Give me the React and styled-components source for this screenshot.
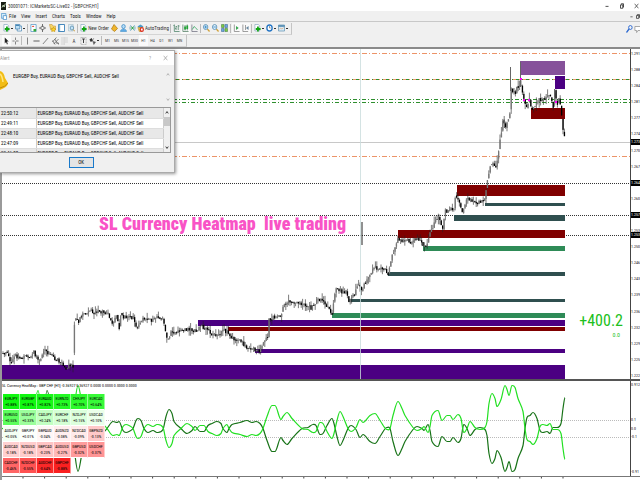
import React from "react";
import styled, { createGlobalStyle } from "styled-components";

const narrow = `"Liberation Sans Narrow", "Roboto Condensed", "Liberation Sans", sans-serif`;

const GlobalStyle = createGlobalStyle`
  * {
    box-sizing: border-box;
  }

  body {
    background: #fff;
    font-family: ${narrow};
    margin: 0;
    overflow: hidden;
  }

  button {
    background: none;
    border: 0;
    color: inherit;
    font: inherit;
    padding: 0;
  }
`;

const Terminal = styled.div`
  display: flex;
  flex-direction: column;
  min-height: 100vh;
`;

const TitleBar = styled.header`
  align-items: center;
  background: #fff;
  display: flex;
  gap: 2px;
  height: 11px;
  padding-left: 1px;
`;

const Title = styled.h1`
  color: #333;
  flex: 1;
  font-size: 5px;
  font-weight: normal;
  line-height: 10px;
  margin: 0;
`;

const WindowControls = styled.div`
  display: flex;
  gap: ${props => props.$gap || 0}px;
  margin-right: -1px;
`;

const IconButton = styled.button`
  align-items: center;
  background: ${props => (props.$pressed ? "#fafafa" : "transparent")};
  color: ${props => props.$color || "#333"};
  display: flex;
  flex: none;
  gap: 1px;
  height: 11px;
  justify-content: center;
  min-width: ${props => props.$width || 9}px;
`;

const Timeframe = styled(IconButton)`
  color: #444;
  font-size: 4px;
`;

const MenuBar = styled.nav`
  align-items: center;
  background: #f0f0f0;
  border-bottom: 1px solid #c8c8c8;
  color: #222;
  display: flex;
  font-size: 5px;
  height: 11px;
  line-height: 10px;
  padding-left: 1px;
`;

const MenuItem = styled.button`
  margin-right: ${props => (props.$last ? "auto" : "5px")};
`;

const AppIcon = styled.span`
  display: flex;
  margin-right: 2px;
`;

const Toolbar = styled.div`
  align-items: center;
  background: #f0f0f0;
  display: flex;
  font-size: 5px;
  height: ${props => props.$height}px;
  justify-content: space-between;
`;

const ToolGroup = styled.div`
  align-items: center;
  border-bottom: 1px solid #d4d4d4;
  border-right: 1px solid #c4c4c4;
  display: flex;
  height: 12px;
  padding: 0 2px;
`;

const Divider = styled.i`
  border-left: 1px solid #bbb;
  height: 9px;
  margin: 0 1px;
`;

const Caret = styled.i`
  background: #333;
  height: 1px;
  margin-right: 1px;
  width: 2px;
`;

const Workspace = styled.main`
  border-left: 2px solid #9a9a9a;
  border-top: 2px solid #8a8a8a;
  display: flex;
  flex: 1;
  flex-direction: column;
  position: relative;
`;

const Pane = styled.section`
  border-bottom: ${props => props.$border};
  display: flex;
  flex: ${props => props.$grow} 1 0;
  min-height: 0;
`;

const Plot = styled.div`
  flex: 1;
  min-width: 0;
  position: relative;

  > svg {
    display: block;
    height: 100%;
    left: 0;
    position: absolute;
    width: 100%;
  }
`;

const Axis = styled.div`
  border-left: 1px solid #444;
  color: #111;
  display: flex;
  flex: none;
  flex-direction: column;
  font-size: 4px;
  justify-content: space-between;
  line-height: 6px;
  padding-top: 2px;
  position: relative;
  width: 10px;
`;

const Tick = styled.span`
  white-space: nowrap;
`;

const PriceTag = styled.span`
  background: #000;
  color: #fff;
  left: 0;
  position: absolute;
  top: ${props => props.$top}%;
  width: 100%;
`;

const SubTick = styled.span`
  left: 0;
  position: absolute;
  top: ${props => props.$top}%;
`;

const Caption = styled.p`
  color: #f953c6;
  font-size: 18px;
  font-weight: 900;
  left: 97px;
  line-height: 20px;
  margin: 0;
  position: absolute;
  top: 50%;
  white-space: pre;
`;

const Profit = styled.div`
  bottom: 40px;
  color: #20bf20;
  font-size: 16px;
  line-height: 20px;
  position: absolute;
  right: 7px;
  text-align: right;
`;

const Pips = styled.div`
  font-size: 6px;
  line-height: 8px;
  padding-right: 3px;
`;

const Dialog = styled.section`
  background: #f0f0f0;
  border: 1px solid #aaa;
  border-left: 0;
  box-shadow: 1px 1px 3px rgba(0, 0, 0, 0.4);
  font-size: 5px;
  left: -2px;
  position: absolute;
  top: 1px;
  width: 175px;
`;

const DialogTitle = styled.div`
  align-items: center;
  background: #fff;
  color: #999;
  display: flex;
  height: 14px;
  padding-right: 1px;
`;

const DialogName = styled.span`
  flex: 1;
`;

const Message = styled.div`
  display: flex;
  height: 42px;
  justify-content: space-between;
  padding: 5px 3px 3px 0;
`;

const MessageText = styled.p`
  flex: 1;
  line-height: 8px;
  margin: 2px 0 0 4px;
`;

const ScrollArrows = styled.div`
  align-items: center;
  background: ${props => (props.$filled ? "#f0f0f0" : "transparent")};
  color: ${props => (props.$filled ? "#222" : "#aaa")};
  display: flex;
  flex-direction: column;
  justify-content: space-between;
  padding: 2px 0;
  width: 6px;
`;

const Thumb = styled.i`
  background: #c8c8c8;
  height: 9px;
  margin: 2px 0 auto;
  width: 6px;
`;

const LogBox = styled.div`
  background: #fff;
  border: 1px solid #999;
  border-left: 0;
  display: flex;
  height: 46px;
  margin-right: 3px;
  overflow: hidden;
`;

const Log = styled.table`
  border-collapse: collapse;
  flex: 1;
  height: 50px;
`;

const LogRow = styled.tr`
  background: ${props => (props.$shaded ? "#e8e8e8" : "#fff")};
`;

const LogCell = styled.td`
  border-bottom: 1px solid #ddd;
  border-right: 1px solid #ccc;
  height: 10px;
  line-height: 8px;
  padding: 0 1px;
  width: ${props => props.$width || "auto"};
`;

const DialogFooter = styled.div`
  display: flex;
  justify-content: center;
  padding: 4px 12px 4px 0;
`;

const OkButton = styled.button`
  background: #e4e4e4;
  border: 1px solid #1979ca;
  height: 11px;
  line-height: 9px;
  width: 25px;
`;

const PaneLabel = styled.div`
  font-size: 4px;
  left: 0;
  line-height: 5px;
  position: absolute;
  top: 2px;
  white-space: nowrap;
`;

const Heatmap = styled.table`
  border-collapse: separate;
  border-spacing: 0;
  font-size: 4px;
  left: 1px;
  line-height: 6px;
  position: absolute;
  text-align: center;
  top: 13px;
`;

const HeatCell = styled.td`
  background: ${props => props.$color};
  border-bottom: 1px solid #fff;
  border-right: 1px solid rgba(255, 255, 255, 0.5);
  height: 16px;
  min-width: 17px;
  padding: 0;
  width: 17px;
`;

const TimeScale = styled.footer`
  height: 3px;

  svg {
    display: block;
    height: 100%;
    width: 100%;
  }
`;

const glyphs = {
  newChart: (
    <>
      <path d="M2 1h8l3 3v10H2z" fill="#fff" stroke="#5582a8" />
      <path d="M9 5v10M4 10h11" stroke="#12a512" strokeWidth="4" />
    </>
  ),
  windows: (
    <>
      <path d="M5 4h10v10H5z" fill="#fff" stroke="#3e80b0" strokeWidth="1.5" />
      <path d="M1 1h10v9H1z" fill="#bfe0f4" stroke="#3e80b0" strokeWidth="1.5" />
      <path d="M2 3h8" stroke="#3e80b0" strokeWidth="2" />
    </>
  ),
  market: (
    <>
      <path d="M2 1h12v14H2z" fill="#fff" stroke="#4c93c4" strokeWidth="1.5" />
      <path d="M4 6l3-3 3 3z" fill="#e13c2c" />
      <path d="M8 10h6v5H8z" fill="#35a835" />
    </>
  ),
  move: (
    <>
      <circle cx="8" cy="8" r="4" fill="none" stroke="#666" strokeWidth="1.5" />
      <path d="M8 0v6M8 10v6M0 8h6M10 8h6" stroke="#666" strokeWidth="2" />
    </>
  ),
  star: (
    <>
      <path d="M1 1h6l2 3h6v8H4z" fill="#f5d567" stroke="#ba8820" />
      <path d="M10 6l2 3 4 1-3 2v4l-3-2-4 1 1-3-2-3h4z" fill="#ffd22d" stroke="#b98600" />
    </>
  ),
  panel: (
    <>
      <path d="M1 1h14v14H1z" fill="#fff" stroke="#397fb8" strokeWidth="2" />
      <path d="M2 2h3v12H2z" fill="#7db6dd" />
    </>
  ),
  tester: (
    <>
      <path d="M1 1h11v13H1z" fill="#d9e9f3" stroke="#92aebd" />
      <circle cx="9" cy="8" r="4" fill="#c4e3f7" stroke="#5084a7" strokeWidth="1.5" />
      <path d="M12 11l4 4" stroke="#c9952b" strokeWidth="2" />
    </>
  ),
  gold: <path d="M7 1l8 8-7 6-7-5z" fill="#f0b52c" stroke="#ad7911" strokeWidth="1.5" />,
  person: (
    <>
      <circle cx="8" cy="5" r="4" fill="#b5dcf7" stroke="#3083c0" strokeWidth="1.5" />
      <path d="M1 15c0-7 14-7 14 0z" fill="#5daae4" stroke="#3083c0" />
    </>
  ),
  signal: (
    <>
      <path d="M4 2q-5 6 0 12M12 2q5 6 0 12" fill="none" stroke="#75acca" strokeWidth="1.5" />
      <path d="M6 4q-3 4 0 8M10 4q3 4 0 8" fill="none" stroke="#4ba27b" strokeWidth="1.5" />
      <circle cx="8" cy="8" r="2" fill="#28a640" />
    </>
  ),
  auto: (
    <>
      <path d="M1 5l7-4 7 4-7 4z" fill="#4d9ac9" />
      <path d="M2 7h12l-3 8H5z" fill="#eac64b" stroke="#a98325" />
      <circle cx="11" cy="11" r="5" fill="#de2d1f" />
      <path d="M9 9h4v4H9z" fill="#fff" />
    </>
  ),
  bars: <path d="M3 1v14H15M1 3h2M7 4v8M5 9h2M7 5h2M12 2v10M12 4h3" fill="none" stroke="#3d795b" strokeWidth="1.5" />,
  candles: (
    <>
      <path d="M2 1v14h13M7 2v11M12 1v12" fill="none" stroke="#467359" strokeWidth="1.5" />
      <path d="M5 5h4v6H5zM10 3h4v7h-4z" fill="#21a435" />
    </>
  ),
  line: (
    <>
      <path d="M2 1v14h13" fill="none" stroke="#667" strokeWidth="1.5" />
      <path d="M3 11l4-6 3 2 5 5" fill="none" stroke="#22a052" strokeWidth="1.5" />
    </>
  ),
  zoomIn: (
    <>
      <path d="M10 10l5 5" stroke="#d0a13a" strokeWidth="3" />
      <circle cx="6" cy="6" r="5" fill="#e1f1fc" stroke="#3c7ca8" strokeWidth="1.5" />
      <path d="M6 3v6M3 6h6" stroke="#167ac0" strokeWidth="1.5" />
    </>
  ),
  zoomOut: (
    <>
      <path d="M10 10l5 5" stroke="#d0a13a" strokeWidth="3" />
      <circle cx="6" cy="6" r="5" fill="#e1f1fc" stroke="#3c7ca8" strokeWidth="1.5" />
      <path d="M3 6h6" stroke="#167ac0" strokeWidth="1.5" />
    </>
  ),
  tile: (
    <>
      <path d="M1 1h6v6H1zM9 9h6v6H9z" fill="#7fcb42" stroke="#306e37" />
      <path d="M9 1h6v6H9zM1 9h6v6H1z" fill="#6ba9de" stroke="#2b5282" />
    </>
  ),
  scroll: (
    <>
      <path d="M3 1v14h12" fill="none" stroke="#777" strokeWidth="1.5" />
      <path d="M7 4l6 4-6 4z" fill="#31a44a" />
    </>
  ),
  shift: (
    <>
      <path d="M2 1v14h12M8 2v10" fill="none" stroke="#777" strokeWidth="1.5" />
      <path d="M15 4l-6 4 6 4z" fill="#68879f" />
    </>
  ),
  clock: (
    <>
      <circle cx="8" cy="8" r="6" fill="#fff" stroke="#2676c4" strokeWidth="3" />
      <path d="M8 4v4h3" fill="none" stroke="#333" />
    </>
  ),
  template: (
    <>
      <path d="M1 2h14v12H1z" fill="#d9ebf6" stroke="#5c90b0" strokeWidth="1.5" />
      <path d="M1 4h14" stroke="#4380aa" strokeWidth="3" />
      <path d="M3 11l3-3 3 2 4-3" fill="none" stroke="#e48f48" />
    </>
  ),
  cursor: <path d="M4 1v12l3-3 2 5 2-1-2-5h4z" fill="#222" />,
  cross: <path d="M8 1v5M8 9v6M1 8h5M9 8h6" stroke="#555" strokeWidth="1.5" />,
  vertical: <path d="M8 1v14" stroke="#555" strokeWidth="1.5" />,
  horizontal: <path d="M1 8h14" stroke="#555" strokeWidth="2" />,
  trend: <path d="M2 14L14 2" stroke="#555" strokeWidth="1.5" />,
  channel: <path d="M1 10L10 1M4 14L15 4M1 7l6 8M6 4l7 9M9 12h6v3" fill="none" stroke="#555" strokeWidth="1.5" />,
  fibo: <path d="M1 2h14M1 6h14M1 10h14M1 14h9" stroke="#888" strokeDasharray="2 1" />,
  label: (
    <>
      <path d="M2 1h12v14H2z" fill="none" stroke="#777" strokeDasharray="2 1" />
      <path d="M5 4h6M8 4v8" stroke="#333" strokeWidth="2" />
    </>
  ),
  arrows: (
    <>
      <path d="M1 5l5-3 3 5-5 3z" fill="#333" />
      <path d="M9 9l6 1-4 5zM11 2l-4 8" fill="#555" stroke="#555" />
    </>
  ),
  search: (
    <>
      <circle cx="10" cy="5" r="4" fill="none" stroke="#2c69d1" strokeWidth="2" />
      <path d="M7 8l-6 7" stroke="#2c69d1" strokeWidth="3" />
    </>
  ),
  chat: <path d="M2 3h13v8H9l-3 4v-4H2z" fill="#fff" stroke="#888" strokeWidth="1.5" />,
  minimize: <path d="M2 9h12" stroke="#222" strokeWidth="2.5" />,
  restore: <path d="M2 5h9v9H2zM5 4V2h9v9h-2" fill="none" stroke="#222" strokeWidth="2.5" />,
  close: <path d="M2 2l12 12M14 2L2 14" stroke="currentColor" strokeWidth="2" />,
  app: (
    <>
      <path d="M0 0h16v16H0z" fill="#171d14" />
      <path d="M3 11l4-5 3 4 4-7" fill="none" stroke="#d9eccb" strokeWidth="2" />
    </>
  ),
  chartWindow: (
    <>
      <path d="M1 1h12v11H1z" fill="#d6edfa" stroke="#5a9dcf" strokeWidth="2" />
      <path d="M6 6h9v9H6z" fill="#fff" stroke="#4e93ca" strokeWidth="2" />
    </>
  ),
  up: <path d="M3 11l5-6 5 6" fill="none" stroke="currentColor" strokeWidth="3" />,
  down: <path d="M3 5l5 6 5-6" fill="none" stroke="currentColor" strokeWidth="3" />,
};

const Glyph = ({ name, width = 7, height = 8 }) => (
  <svg
    width={width}
    height={height}
    viewBox="0 0 16 16"
    preserveAspectRatio="none"
    aria-hidden="true">
    {glyphs[name]}
  </svg>
);

const Tool = ({ name, label, children, ...rest }) => (
  <IconButton aria-label={label || name} {...rest}>
    <Glyph name={name} />
    {children}
  </IconButton>
);

const menus = ["File", "View", "Insert", "Charts", "Tools", "Window", "Help"];
const timeframes = ["M1", "M5", "M15", "M30", "H1", "H4", "D1", "W1", "MN"];

const prices = [
  "1.291", "1.288", "1.284", "1.281", "1.277", "1.274", "1.270",
  "1.267", "1.264", "1.260", "1.257", "1.253", "1.250", "1.246",
  "1.243", "1.239", "1.236", "1.232", "1.229", "1.225", "1.222",
];

const alert = "EURGBP Buy, EURAUD Buy, GBPCHF Sell, AUDCHF Sell";
const alertTimes = ["22:50:12", "22:49:11", "22:48:10", "22:47:09", "22:46:08"];

const heat = [
  [
    ["EURJPY", "+0.88%", "#10f810"],
    ["EURGBP", "+0.87%", "#10f810"],
    ["EURAUD", "+0.82%", "#18f818"],
    ["EURNZD", "+0.73%", "#24fa24"],
    ["CHFJPY", "+0.70%", "#2cfa2c"],
    ["EURCAD", "+0.64%", "#38fa38"],
  ],
  [
    ["EURUSD", "+0.55%", "#5cff5c"],
    ["USDJPY", "+0.33%", "#9cff9c"],
    ["CADJPY", "+0.24%", "#c2ffc2"],
    ["EURCHF", "+0.18%", "#d4ffd4"],
    ["NZDJPY", "+0.15%", "#dcffdc"],
    ["USDCAD", "+0.10%", "#eaffea"],
  ],
  [
    ["AUDJPY", "+0.05%", "#f4fff4"],
    ["GBPJPY", "+0.01%", "#fcfffc"],
    ["GBPAUD", "-0.04%", "#fff6f6"],
    ["AUDNZD", "-0.08%", "#ffeeee"],
    ["NZDCAD", "-0.09%", "#ffeaea"],
    ["GBPNZD", "-0.13%", "#ffc8c8"],
  ],
  [
    ["AUDCAD", "-0.18%", "#ffd0d0"],
    ["NZDUSD", "-0.18%", "#ffcccc"],
    ["GBPCAD", "-0.23%", "#ffc4c4"],
    ["AUDUSD", "-0.27%", "#ffb8b8"],
    ["GBPUSD", "-0.32%", "#ff9c9c"],
    ["USDCHF", "-0.37%", "#ff9494"],
  ],
  [
    ["CADCHF", "-0.46%", "#ff6666"],
    ["NZDCHF", "-0.55%", "#ff5252"],
    ["AUDCHF", "-0.64%", "#fa2828"],
    ["GBPCHF", "-0.88%", "#fa2020"],
  ],
];

// x, y, height, fill; every zone runs up to the last bar
const zones = [
  [520, 61, 14, "#86519a"],
  [555, 76, 13, "#4b0082"],
  [531, 108, 11, "#800000"],
  [457, 185, 11, "#800000"],
  [485, 203, 3, "#2f4f4f"],
  [454, 215, 6, "#2f4f4f"],
  [398, 230, 8, "#800000"],
  [423, 246, 5, "#2e8b57"],
  [388, 272, 4, "#2f4f4f"],
  [349, 299, 3, "#2f4f4f"],
  [332, 313, 5, "#2e8b57"],
  [198, 320, 6, "#4b0082"],
  [228, 327, 4, "#800000"],
  [255, 349, 4, "#4b0082"],
  [2, 365, 14, "#4b0082"],
];
const lastBar = 565;

const levels = [
  [53, "#ec9468", "5 2 1 2"],
  [79, "#ec9468", "5 2 1 2"],
  [79, "#2f8f2f", "1 3 3 3"],
  [99, "#2f8f2f", "4 2 1 2"],
  [102, "#2f8f2f", "4 2 1 2"],
  [156, "#ec9468", "5 2 1 2"],
  [142, "#c8c8c8", "none"],
  [183, "#333", "1 1"],
  [215, "#333", "1 1"],
  [235, "#333", "1 1"],
];

const trend = [
  [2, 355], [7, 350], [11, 364], [15, 356], [20, 358], [26, 355], [31, 357],
  [34, 352], [40, 362], [44, 349], [50, 355], [56, 360], [61, 361], [66, 369],
  [70, 364], [73, 367], [74, 330], [75, 318], [78, 322], [82, 314], [87, 312],
  [90, 310], [95, 312], [104, 312], [108, 313], [112, 322], [117, 316],
  [119, 328], [121, 315], [126, 317], [133, 317], [137, 330], [141, 320],
  [146, 318], [152, 320], [156, 317], [163, 319], [166, 333], [168, 341],
  [171, 333], [176, 333], [180, 331], [190, 328], [196, 332], [201, 326],
  [208, 329], [216, 337], [225, 330], [230, 335], [234, 340], [240, 338],
  [245, 347], [252, 348], [258, 351], [261, 348], [264, 341], [268, 335],
  [269, 320], [275, 316], [281, 318], [283, 305], [288, 302], [296, 302],
  [305, 304], [312, 308], [318, 299], [323, 301], [328, 307], [332, 313],
  [334, 300], [336, 290], [340, 291], [346, 292], [349, 300], [355, 293],
  [358, 282], [362, 291], [366, 281], [370, 274], [375, 267], [380, 270],
  [384, 268], [388, 273], [392, 257], [396, 243], [398, 238], [402, 241],
  [407, 239], [412, 242], [416, 239], [422, 242], [426, 248], [430, 232],
  [433, 226], [438, 216], [443, 228], [445, 211], [450, 210], [454, 207],
  [456, 194], [459, 201], [463, 213], [465, 205], [468, 197], [473, 202],
  [478, 202], [485, 198], [488, 178], [491, 163], [496, 168], [500, 141],
  [503, 121], [506, 127], [510, 111], [511, 90], [515, 93], [519, 84],
  [522, 88], [524, 98], [527, 109], [529, 98], [532, 110], [537, 100],
  [543, 100], [550, 95], [553, 107], [555, 91], [557, 106], [559, 98],
  [561, 108], [563, 128], [565, 141],
];

const noise = n => {
  const s = Math.sin(n * 127.1) * 43758.5453;
  return s - Math.floor(s);
};

const priceAt = x => {
  const i = Math.max(1, trend.findIndex(p => p[0] >= x));
  const [x0, y0] = trend[i - 1];
  const [x1, y1] = trend[i];
  return y0 + ((y1 - y0) * (x - x0)) / (x1 - x0);
};

const bars = [];
for (let x = 3, n = 0; x < 565; x += 1.4, n++) {
  const open = priceAt(x - 1) + (noise(n) - 0.5) * 4;
  const close = priceAt(x) + (noise(n + 1) - 0.5) * 4;
  bars.push({
    x,
    down: close > open,
    top: Math.min(open, close),
    bottom: Math.max(open, close) + 0.6,
    high: Math.min(open, close) - noise(n + 500) ** 2 * 6,
    low: Math.max(open, close) + noise(n + 900) ** 2 * 6,
  });
}

const PriceChart = () => (
  <svg viewBox="2 49 628 330" preserveAspectRatio="none">
    {levels.map(([y, color, dash], i) => (
      <line
        key={i}
        x1="2"
        x2="630"
        y1={y + 0.5}
        y2={y + 0.5}
        stroke={color}
        strokeDasharray={dash}
        shapeRendering="crispEdges"
      />
    ))}
    {zones.map(([x, y, height, fill]) => (
      <rect key={y} x={x} y={y} width={lastBar - x} height={height} fill={fill} />
    ))}
    {bars.map(bar => (
      <g key={bar.x}>
        <line
          x1={bar.x}
          x2={bar.x}
          y1={bar.high}
          y2={bar.low}
          stroke="#222"
          strokeWidth="0.6"
        />
        <rect
          x={bar.x - 0.6}
          y={bar.top}
          width="1.3"
          height={bar.bottom - bar.top}
          fill={bar.down ? "#000" : "#777"}
        />
      </g>
    ))}
    <path d="M510.500 67v24M504.500 120v8M520.500 62v25M554.500 89v8" stroke="#666" fill="none" />
    <path d="M362 222v23" stroke="#222" />
    <path d="M520 78h2v2h-2zM523 99h2v2h-2zM528 99h2v2h-2zM555 101h2v2h-2z" fill="#f0f" />
    <path d="M360.500 49v330" stroke="#c9dcdc" strokeOpacity="0.8" />
  </svg>
);

// strength of the first currency, x against height over the zero line
const strength = [
  [2, 0], [12, 4], [22, -3], [32, 8], [38, 38], [42, 10], [47, -38], [54, -4],
  [62, 6], [70, -4], [74, 20], [78, 43], [82, 25], [88, 2], [95, -6],
  [103, 4], [107, 0], [113, -7], [117, -6], [119, -7], [123, 2], [126, 4],
  [129, 3], [133, 0], [136, -8], [138, -10], [141, -8], [144, 0], [148, 4],
  [153, 2], [157, 4], [163, 1], [166, -12], [169, -19], [172, -15],
  [174, -7], [181, 0], [187, 5], [192, 2], [195, -2], [200, 3], [204, 3],
  [208, -3], [212, -5], [217, -7], [221, -5], [223, 0], [227, 4], [229, 0],
  [232, -4], [240, -6], [247, -8], [252, -6], [256, -7], [260, -5], [263, 0],
  [267, 12], [272, 23], [275, 23], [281, 9], [283, 12], [287, 16], [292, 10],
  [302, 0], [308, -1], [313, -4], [316, -3], [320, 6], [323, 5], [327, -3],
  [332, -10], [334, -5], [337, 8], [340, 17], [343, 12], [348, 0], [351, -3],
  [356, 1], [360, 9], [363, 6], [370, 13], [375, 15], [380, 8], [387, -1],
  [390, 0], [393, 13], [398, 27], [402, 20], [405, 13], [413, 1], [417, -2],
  [422, 0], [424, 2], [428, -4], [430, 2], [432, 13], [438, 18], [442, 8],
  [447, 13], [450, 13], [453, 9], [458, 14], [461, 10], [463, -2], [464, -4],
  [467, 0], [470, 7], [475, 1], [480, -1], [485, 1], [487, 7], [489, 25],
  [492, 35], [495, 30], [497, 22], [501, 29], [505, 43], [507, 39],
  [509, 33], [512, 43], [515, 41], [518, 30], [523, 17], [525, 0],
  [527, -11], [530, -13], [533, -16], [537, -10], [540, 2], [543, 4],
  [547, 3], [550, 5], [553, -1], [557, -1], [561, -5], [563, -20], [565, -31],
];

// horizontal tangents at the turning points keep the peaks round
const curve = sign => {
  const points = strength.map(([x, v]) => [x, 429.5 - v * sign]);
  const slope = i => {
    const a = points[i - 1];
    const b = points[i];
    const c = points[i + 1];
    if (!a || !c || (b[1] - a[1]) * (c[1] - b[1]) <= 0) {
      return 0;
    }
    return (c[1] - a[1]) / (c[0] - a[0]);
  };
  return points
    .map(([x, y], i) => {
      if (!i) {
        return `M${x} ${y}`;
      }
      const [px, py] = points[i - 1];
      const third = (x - px) / 3;
      return `C${px + third} ${py + slope(i - 1) * third} ${x - third} ${y - slope(i) * third} ${x} ${y}`;
    })
    .join("");
};

const StrengthChart = () => (
  <svg viewBox="2 382 628 95" preserveAspectRatio="none">
    <path d="M2 421.500H630M2 438.500H630" stroke="#bbb" strokeDasharray="1 1" />
    <path d={curve(-1)} fill="none" stroke="#187318" strokeWidth="1.2" />
    <path d={curve(1)} fill="none" stroke="#22e022" strokeWidth="1.2" />
  </svg>
);

const ticks = Array.from({ length: 29 }, (_, i) => 23 + i * 21.6).filter(x => x < 570);

const Bell = () => (
  <svg width="9" height="22" viewBox="0 0 9 22" aria-hidden="true">
    <path d="M0 1q4 1 5 7l3 5q0 3-4 5l-4 2z" fill="#f2bd14" />
    <path d="M0 4q2 1 3 8" fill="none" stroke="#ffe680" strokeWidth="1.5" />
    <path d="M0 18q5-1 8-5" fill="none" stroke="#c08a0c" />
  </svg>
);

const AlertDialog = () => (
  <Dialog role="dialog" aria-label="Alert">
    <DialogTitle>
      <DialogName>Alert</DialogName>
      <IconButton aria-label="Help" $width={16} $color="#999">?</IconButton>
      <IconButton aria-label="Close" $width={15} $color="#999">
        <Glyph name="close" width={5} height={6} />
      </IconButton>
    </DialogTitle>
    <Message>
      <Bell />
      <MessageText>{alert}</MessageText>
      <ScrollArrows>
        <Glyph name="up" width={4} height={5} />
        <Glyph name="down" width={4} height={5} />
      </ScrollArrows>
    </Message>
    <LogBox>
      <Log>
        <tbody>
          {alertTimes.map((time, i) => (
            <LogRow key={time} $shaded={i % 2 === 0}>
              <LogCell $width="36px">{time}</LogCell>
              <LogCell>{alert}</LogCell>
            </LogRow>
          ))}
        </tbody>
      </Log>
      <ScrollArrows $filled>
        <Glyph name="up" width={4} height={5} />
        <Thumb />
        <Glyph name="down" width={4} height={5} />
      </ScrollArrows>
    </LogBox>
    <DialogFooter>
      <OkButton>OK</OkButton>
    </DialogFooter>
  </Dialog>
);

const App = () => (
  <Terminal>
    <GlobalStyle />
    <TitleBar>
      <Glyph name="app" width={5} height={8} />
      <Title>30001071: ICMarketsSC-Live02 - [GBPCHF,H1]</Title>
      <WindowControls $gap={6}>
        <IconButton aria-label="Minimize"><Glyph name="minimize" width={4} height={6} /></IconButton>
        <IconButton aria-label="Restore"><Glyph name="restore" width={4} height={6} /></IconButton>
        <IconButton aria-label="Close"><Glyph name="close" width={5} height={6} /></IconButton>
      </WindowControls>
    </TitleBar>
    <MenuBar>
      <AppIcon><Glyph name="chartWindow" width={6} height={7} /></AppIcon>
      {menus.map((menu, i) => (
        <MenuItem key={menu} $last={i === menus.length - 1}>{menu}</MenuItem>
      ))}
      <WindowControls>
        <IconButton aria-label="Minimize chart" $width={7}><Glyph name="minimize" width={3} height={5} /></IconButton>
        <IconButton aria-label="Restore chart" $width={6}><Glyph name="restore" width={4} height={5} /></IconButton>
      </WindowControls>
    </MenuBar>
    <Toolbar $height={13}>
      <ToolGroup>
        <Tool name="newChart" />
        <Caret />
        <Tool name="windows" />
        <Caret />
        <Divider />
        <Tool name="market" />
        <Tool name="move" />
        <Tool name="star" $width={10} />
        <Tool name="panel" />
        <Tool name="tester" $width={10} />
        <Divider />
        <Tool name="newChart" label="New Order" $width={31}>New Order</Tool>
        <Tool name="gold" />
        <Tool name="person" />
        <Tool name="signal" />
        <Tool name="auto" label="AutoTrading">AutoTrading</Tool>
        <Divider />
        <Tool name="bars" />
        <Tool name="candles" $pressed />
        <Tool name="line" />
        <Divider />
        <Tool name="zoomIn" />
        <Tool name="zoomOut" />
        <Tool name="tile" />
        <Divider />
        <Tool name="scroll" $pressed />
        <Tool name="shift" $pressed />
        <Divider />
        <Tool name="newChart" label="Indicators" />
        <Caret />
        <Tool name="clock" />
        <Caret />
        <Tool name="template" />
        <Caret />
      </ToolGroup>
      <WindowControls>
        <Tool name="search" />
        <Tool name="chat" $width={6} />
      </WindowControls>
    </Toolbar>
    <Toolbar $height={12}>
      <ToolGroup>
        <Tool name="cursor" $pressed />
        <Tool name="cross" />
        <Divider />
        <Tool name="vertical" />
        <Tool name="horizontal" />
        <Tool name="trend" />
        <Tool name="channel" $width={10} />
        <Tool name="fibo" />
        <IconButton $width={10}>A</IconButton>
        <Tool name="label" />
        <Tool name="arrows" />
        <Caret />
        <Divider />
        {timeframes.map(frame => (
          <Timeframe key={frame} $width={9} $pressed={frame === "H1"}>{frame}</Timeframe>
        ))}
      </ToolGroup>
    </Toolbar>
    <Workspace>
      <Pane $grow={330} $border="2px solid #555">
        <Plot>
          <PriceChart />
          <Caption>SL Currency Heatmap  live trading</Caption>
          <Profit>
            <div>+400.2</div>
            <Pips>0.0</Pips>
          </Profit>
        </Plot>
        <Axis>
          {prices.map(price => (
            <Tick key={price}>{price}</Tick>
          ))}
          <PriceTag $top={27.4}>1.273</PriceTag>
          <PriceTag $top={39.8}>1.264</PriceTag>
          <PriceTag $top={49.4}>1.257</PriceTag>
          <PriceTag $top={55.6}>1.253</PriceTag>
        </Axis>
      </Pane>
      <Pane $grow={95} $border="1px solid #777">
        <Plot>
          <StrengthChart />
          <PaneLabel>
            SL Currency HeatMap : GBP CHF [H1] -0.36927 0.36927 0.0000 0.0000 0.0000 0.0000
          </PaneLabel>
          <Heatmap>
            <tbody>
              {heat.map(row => (
                <tr key={row[0][0]}>
                  {row.map(([pair, change, color]) => (
                    <HeatCell key={pair} $color={color}>
                      {pair}
                      <br />
                      {change}
                    </HeatCell>
                  ))}
                </tr>
              ))}
            </tbody>
          </Heatmap>
        </Plot>
        <Axis>
          <SubTick $top={1}>0.912</SubTick>
          <SubTick $top={38}>0.1</SubTick>
          <SubTick $top={47}>0.0</SubTick>
          <SubTick $top={56}>-0.1</SubTick>
          <SubTick $top={93}>-0.91</SubTick>
        </Axis>
      </Pane>
      <TimeScale>
        <svg viewBox="2 478 638 2" preserveAspectRatio="none">
          {ticks.map(x => (
            <path key={x} d={`M${x} 478v1`} stroke="#444" />
          ))}
        </svg>
      </TimeScale>
      <AlertDialog />
    </Workspace>
  </Terminal>
);

export default App;
